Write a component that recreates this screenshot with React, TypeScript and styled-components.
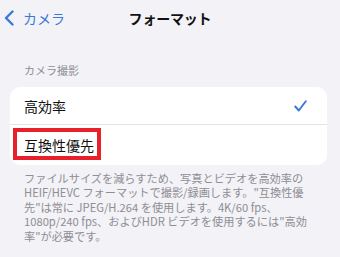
import React from 'react'
import styled, { createGlobalStyle } from 'styled-components'

const GlobalStyle = createGlobalStyle`
  html, body {
    margin: 0;
    padding: 0;
    background: #f2f2f7;
  }
  body {
    font-family: "Noto Sans CJK JP", "Noto Sans", sans-serif;
    -webkit-font-smoothing: antialiased;
  }
`

const Page = styled.div`
  width: 340px;
  height: 257px;
  background: #f2f2f7;
  overflow: hidden;
`

const NavBar = styled.div`
  display: grid;
  grid-template-columns: 1fr auto 1fr;
  align-items: center;
  height: 36px;
`

const BackButton = styled.div`
  display: flex;
  align-items: center;
  gap: 9px;
  padding-left: 4px;
  color: #3a78d8;
  font-size: 14px;
`

const Title = styled.div`
  font-size: 14px;
  font-weight: 700;
  color: #111;
  letter-spacing: -0.2px;
`

const SectionHeader = styled.div`
  margin-top: 27px;
  padding-left: 24px;
  font-size: 11px;
  line-height: 14px;
  color: #8e8e93;
`

const Card = styled.div`
  margin: 10px 13px 0 10px;
  background: #fff;
  border-radius: 10px;
  overflow: hidden;
`

const Row = styled.div<{ $height: number; $divider?: boolean }>`
  position: relative;
  display: flex;
  align-items: center;
  justify-content: space-between;
  height: ${({ $height }) => $height}px;
  padding: 0 20px 0 14px;
  border-bottom: ${({ $divider }) => ($divider ? '1px solid #e4e4e8' : 'none')};
  font-size: 14px;
  color: #111;
`

const Highlight = styled.div`
  position: absolute;
  left: 3px;
  top: 3px;
  width: 80px;
  height: 24px;
  border: 4px solid #e8202a;
`

const Footer = styled.div`
  padding: 6px 24px 0;
  font-size: 11.2px;
  line-height: 14.4px;
  color: #8e8e93;
  white-space: nowrap;
`

const Chevron = () => (
  <svg width="10" height="16" viewBox="0 0 10 16">
    <polyline points="8.5,1.5 2,8 8.5,14.5" fill="none" stroke="#3a78d8" strokeWidth="2.4" strokeLinecap="round" strokeLinejoin="round" />
  </svg>
)

const Check = () => (
  <svg width="13" height="12" viewBox="0 0 13 12">
    <polyline points="1.2,6.5 4.8,10.5 11.8,1.2" fill="none" stroke="#3a78d8" strokeWidth="1.9" strokeLinecap="round" strokeLinejoin="round" />
  </svg>
)

const footerLines = [
  'ファイルサイズを減らすため、写真とビデオを高効率の',
  'HEIF/HEVC フォーマットで撮影/録画します。"互換性優',
  '先"は常に JPEG/H.264 を使用します。4K/60 fps、',
  '1080p/240 fps、およびHDR ビデオを使用するには"高効',
  '率"が必要です。',
]

export default function App() {
  return (
    <Page>
      <GlobalStyle />
      <NavBar>
        <BackButton>
          <Chevron />
          <span>カメラ</span>
        </BackButton>
        <Title>フォーマット</Title>
        <div />
      </NavBar>

      <SectionHeader>カメラ撮影</SectionHeader>

      <Card>
        <Row $height={37} $divider>
          <span>高効率</span>
          <Check />
        </Row>
        <Row $height={40}>
          <span>互換性優先</span>
          <Highlight />
        </Row>
      </Card>

      <Footer>
        {footerLines.map((line, i) => (
          <div key={i}>{line}</div>
        ))}
      </Footer>
    </Page>
  )
}
